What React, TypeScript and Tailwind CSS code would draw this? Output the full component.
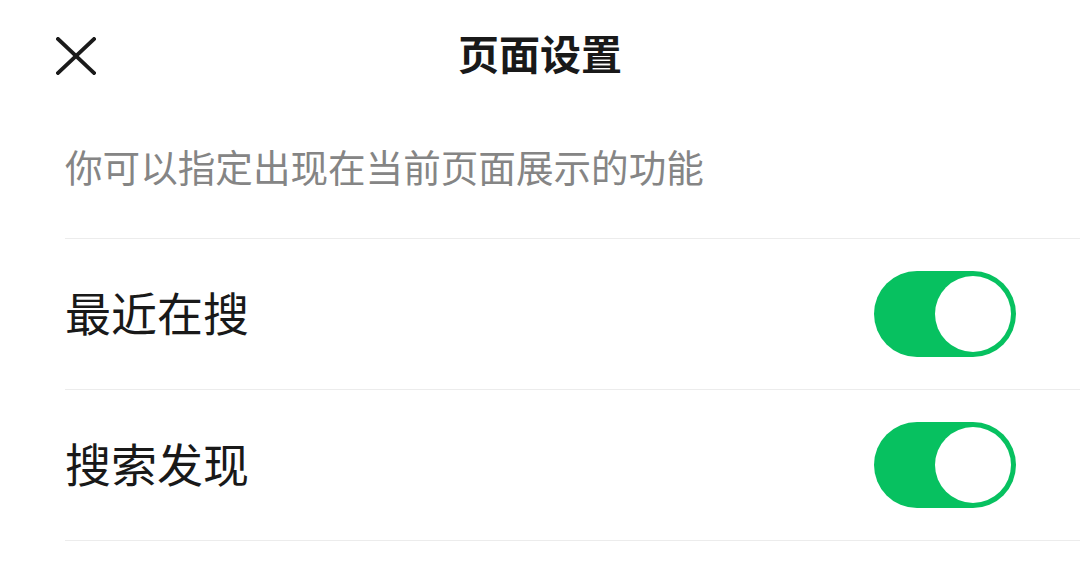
import React from "react";

function Toggle() {
  return (
    <div className="w-[142px] h-[86px] rounded-full bg-[#07c160] p-[5px] flex justify-end">
      <div className="w-[76px] h-[76px] rounded-full bg-white" />
    </div>
  );
}

function Row({ label }: { label: string }) {
  return (
    <div className="h-[151px] border-t border-[#ececec] flex items-center justify-between pr-[64px]">
      <span className="text-[46px] leading-none text-[#191919] pb-[6px]">{label}</span>
      <Toggle />
    </div>
  );
}

export default function App() {
  return (
    <div
      className="w-[1080px] h-[572px] bg-white overflow-hidden"
      style={{ fontFamily: '"Noto Sans CJK SC", "Noto Sans", sans-serif' }}
    >
      <div className="h-[112px] grid grid-cols-[1fr_auto_1fr] items-center">
        <div className="pl-[56px]">
          <svg width="40" height="38" viewBox="0 0 40 38" fill="none" stroke="#1a1a1a" strokeWidth="3.8" strokeLinecap="square">
            <line x1="2" y1="2" x2="38" y2="36" />
            <line x1="38" y1="2" x2="2" y2="36" />
          </svg>
        </div>
        <h1 className="text-[41px] font-bold leading-none text-[#191919] pb-[8px]">页面设置</h1>
        <div />
      </div>
      <div className="pl-[65px]">
        <div className="h-[126px] pt-[35px] text-[37.6px] leading-none text-[#858585]">
          你可以指定出现在当前页面展示的功能
        </div>
        <Row label="最近在搜" />
        <div className="border-b border-[#ececec]">
          <Row label="搜索发现" />
        </div>
      </div>
    </div>
  );
}
